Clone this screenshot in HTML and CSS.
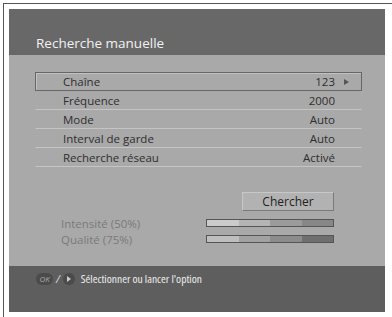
FILE: index.html
```html
<!DOCTYPE html>
<html>
<head>
  <title>Recherche manuelle</title>
  <link rel="stylesheet" href="styles.css">
</head>
<body>
<div class="frame">
  <div class="panel">
    <div class="header">
      <h1 class="title">Recherche manuelle</h1>
    </div>
    <div class="content">
      <ul class="options">
        <li class="option selected"><span class="label">Chaîne</span><span class="value">123</span><span class="more"><span class="arrow"></span></span></li>
        <li class="option"><span class="label">Fréquence</span><span class="value">2000</span><span class="more"></span></li>
        <li class="option"><span class="label">Mode</span><span class="value">Auto</span><span class="more"></span></li>
        <li class="option"><span class="label">Interval de garde</span><span class="value">Auto</span><span class="more"></span></li>
        <li class="option"><span class="label">Recherche réseau</span><span class="value">Activé</span><span class="more"></span></li>
      </ul>
      <div class="actions">
        <button class="btn">Chercher</button>
      </div>
      <div class="signals">
        <div class="signal">
          <span class="signal-label">Intensité (50%)</span>
          <div class="meter meter-strength"><i></i><i></i><i></i><i></i></div>
        </div>
        <div class="signal">
          <span class="signal-label">Qualité (75%)</span>
          <div class="meter meter-quality"><i></i><i></i><i></i><i></i></div>
        </div>
      </div>
    </div>
    <div class="footer">
      <span class="key-ok">OK</span>
      <span class="slash">/</span>
      <span class="key-right"><span class="key-arrow"></span></span>
      <span class="hint">Sélectionner ou lancer l'option</span>
    </div>
  </div>
</div>
</body>
</html>
```

FILE: styles.css
```css
html, body {
    margin: 0;
    width: 392px;
    height: 317px;
    background-color: white;
    overflow: hidden;
    font-family: "Open Sans", "DejaVu Sans", sans-serif;
}

.frame {
    margin: 3px 0 0 3px;
    height: 314px;
    box-sizing: border-box;
    border-top: 1px solid #555;
    border-left: 1px solid #555;
    padding: 5px 0 0 5px;
}

.panel {
    width: 376px;
    height: 303px;
    display: flex;
    flex-direction: column;
}

.header {
    height: 46px;
    box-sizing: border-box;
    background-color: #686868;
    padding: 0 0 3px 27px;
    display: flex;
    align-items: flex-end;
}

.title {
    margin: 0;
    font-size: 13.5px;
    font-weight: normal;
    line-height: 18px;
    color: #f2f2f2;
}

.content {
    flex: 1;
    background-color: #a9a9a9;
    padding: 17px 23px 0 26px;
}

.options {
    list-style: none;
    margin: 0;
    padding: 0;
}

.option {
    height: 19px;
    box-sizing: border-box;
    display: flex;
    align-items: center;
    padding: 0 12px 0 27px;
    border: 1px solid transparent;
    border-top: none;
    border-bottom-color: #c4c4c4;
    font-size: 11.5px;
    color: #2e2e2e;
}

.option.selected {
    border: 1px solid #666;
    box-shadow: inset 1px 1px 0 #c2c2c2;
}

.value {
    margin-left: auto;
}

.more {
    width: 14px;
    display: flex;
    justify-content: flex-end;
}

.arrow {
    width: 0;
    height: 0;
    border-left: 5px solid #555;
    border-top: 3.5px solid transparent;
    border-bottom: 3.5px solid transparent;
}

.actions {
    margin-top: 25px;
    padding-right: 28px;
    display: flex;
    justify-content: flex-end;
}

.btn {
    width: 92px;
    height: 19px;
    padding: 0;
    border: 1px solid #7a7a7a;
    border-top-color: #c8c8c8;
    border-left-color: #c8c8c8;
    background-color: #b2b2b2;
    font-family: inherit;
    font-size: 12px;
    color: #222;
}

.signals {
    margin-top: 4px;
}

.signal {
    height: 16px;
    display: flex;
    align-items: center;
    justify-content: space-between;
    padding: 0 28px 0 26px;
}

.signal-label {
    font-size: 11.5px;
    color: #7a7a7a;
}

.meter {
    width: 128px;
    height: 8px;
    box-sizing: border-box;
    border: 1px solid #555;
    display: flex;
}

.meter i {
    flex: 1;
}

.meter-strength i:nth-child(1) { background-color: #cbcbcb; }
.meter-strength i:nth-child(2) { background-color: #b4b4b4; }
.meter-strength i:nth-child(3) { background-color: #9b9b9b; }
.meter-strength i:nth-child(4) { background-color: #878787; }

.meter-quality i:nth-child(1) { background-color: #bebebe; }
.meter-quality i:nth-child(2) { background-color: #a2a2a2; }
.meter-quality i:nth-child(3) { background-color: #8c8c8c; }
.meter-quality i:nth-child(4) { background-color: #6f6f6f; }

.footer {
    height: 46px;
    box-sizing: border-box;
    background-color: #5e5e5e;
    padding: 7px 0 0 27px;
    display: flex;
    align-items: flex-start;
}

.key-ok {
    width: 17px;
    height: 12px;
    border-radius: 6px;
    background-color: #4b4b4b;
    color: #aaa;
    font-size: 8px;
    font-style: italic;
    line-height: 12px;
    text-align: center;
}

.slash {
    margin: 0 3px;
    font-size: 11px;
    line-height: 12px;
    font-style: italic;
    color: #ddd;
}

.key-right {
    width: 12px;
    height: 12px;
    border-radius: 50%;
    background-color: #4b4b4b;
    display: flex;
    align-items: center;
    justify-content: center;
}

.key-arrow {
    width: 0;
    height: 0;
    margin-left: 1px;
    border-left: 4px solid #ccc;
    border-top: 3px solid transparent;
    border-bottom: 3px solid transparent;
}

.hint {
    margin-left: 6px;
    font-size: 11.5px;
    line-height: 12px;
    font-stretch: condensed;
    color: #eee;
}
```
